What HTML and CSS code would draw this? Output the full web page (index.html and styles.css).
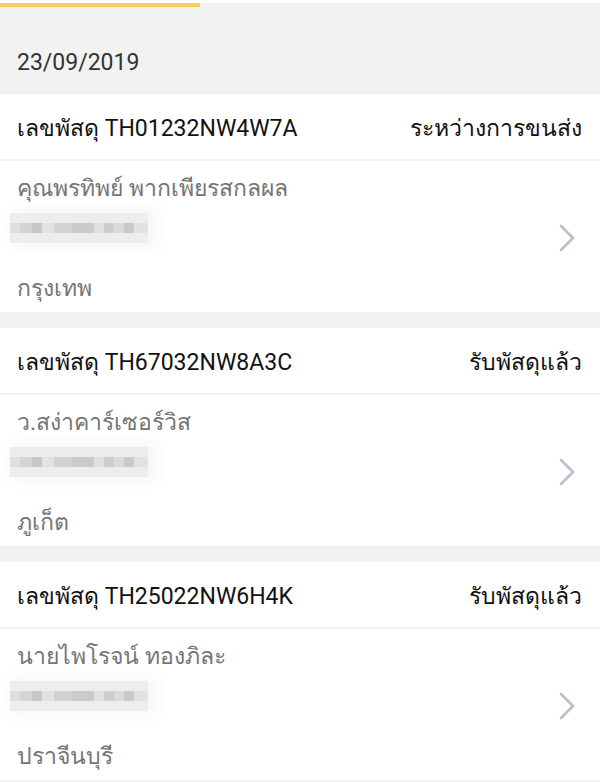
FILE: index.html
```html
<!DOCTYPE html>
<html lang="th">
<head>
<meta charset="utf-8">
<link rel="stylesheet" href="styles.css">
</head>
<body>
<div class="topbar"><div class="progress"></div></div>
<div class="date">23/09/2019</div>

<div class="card">
  <div class="card-head">
    <span class="track">เลขพัสดุ TH01232NW4W7A</span>
    <span class="status">ระหว่างการขนส่ง</span>
  </div>
  <div class="card-body">
    <div class="info">
      <div class="line">คุณพรทิพย์ พากเพียรสกลผล</div>
      <div class="line"><div class="blur"></div></div>
      <div class="line">กรุงเทพ</div>
    </div>
    <svg class="chev" viewBox="0 0 18 28" width="18" height="28"><path d="M3 2 L15 14 L3 26" fill="none" stroke="#b9c0c7" stroke-width="2.6" stroke-linecap="round" stroke-linejoin="round"/></svg>
  </div>
</div>

<div class="card">
  <div class="card-head">
    <span class="track">เลขพัสดุ TH67032NW8A3C</span>
    <span class="status">รับพัสดุแล้ว</span>
  </div>
  <div class="card-body">
    <div class="info">
      <div class="line">ว.สง่าคาร์เซอร์วิส</div>
      <div class="line"><div class="blur"></div></div>
      <div class="line">ภูเก็ต</div>
    </div>
    <svg class="chev" viewBox="0 0 18 28" width="18" height="28"><path d="M3 2 L15 14 L3 26" fill="none" stroke="#b9c0c7" stroke-width="2.6" stroke-linecap="round" stroke-linejoin="round"/></svg>
  </div>
</div>

<div class="card">
  <div class="card-head">
    <span class="track">เลขพัสดุ TH25022NW6H4K</span>
    <span class="status">รับพัสดุแล้ว</span>
  </div>
  <div class="card-body">
    <div class="info">
      <div class="line">นายไพโรจน์ ทองภิละ</div>
      <div class="line"><div class="blur"></div></div>
      <div class="line">ปราจีนบุรี</div>
    </div>
    <svg class="chev" viewBox="0 0 18 28" width="18" height="28"><path d="M3 2 L15 14 L3 26" fill="none" stroke="#b9c0c7" stroke-width="2.6" stroke-linecap="round" stroke-linejoin="round"/></svg>
  </div>
</div>
</body>
</html>
```

FILE: styles.css
```css
html, body {
  margin: 0;
  padding: 0;
}
body {
  width: 600px;
  height: 782px;
  overflow: hidden;
  background: #f2f2f2;
  font-family: Roboto, "Noto Sans", "DejaVu Sans", sans-serif;
  font-size: 23px;
}
.topbar {
  height: 7px;
  padding-top: 3px;
  box-sizing: border-box;
  background: linear-gradient(#fff 0 3px, #f2f2f2 3px);
}
.progress {
  width: 200px;
  height: 4px;
  background: #f6cf60;
}
.date {
  height: 87px;
  box-sizing: border-box;
  padding: 40px 0 0 17px;
  line-height: 32px;
  color: #333;
}
.card {
  background: #fff;
  margin-bottom: 16px;
}
.card-head {
  height: 67px;
  display: flex;
  align-items: center;
  justify-content: space-between;
  padding: 2px 18px 0 17px;
  box-sizing: border-box;
  border-bottom: 2px solid #f2f2f2;
  color: #111;
}
.card-body {
  height: 151px;
  box-sizing: border-box;
  padding: 2px 24px 0 17px;
  display: flex;
  align-items: center;
}
.info {
  flex: 1;
  color: #757575;
}
.line {
  height: 50px;
  display: flex;
  align-items: center;
}
.blur {
  width: 138px;
  height: 30px;
  margin-left: -7px;
  margin-top: -20px;
  background:
    linear-gradient(to right, #dfdfdf 0 10px, #d4d4d4 10px 22px, #c8c8c8 22px 32px, #e2e2e2 32px 44px, #d2d2d2 44px 62px, #cacaca 62px 84px, #e0e0e0 84px 94px, #cdcdcd 94px 104px, #dadada 104px 114px, #c9c9c9 114px 124px, #e2e2e2 124px 138px) center / 100% 10px no-repeat,
    #ededed;
  box-shadow: 6px 0 14px 6px rgba(0, 0, 0, 0.03);
  filter: blur(0.6px);
}
.chev {
  display: block;
}
```
